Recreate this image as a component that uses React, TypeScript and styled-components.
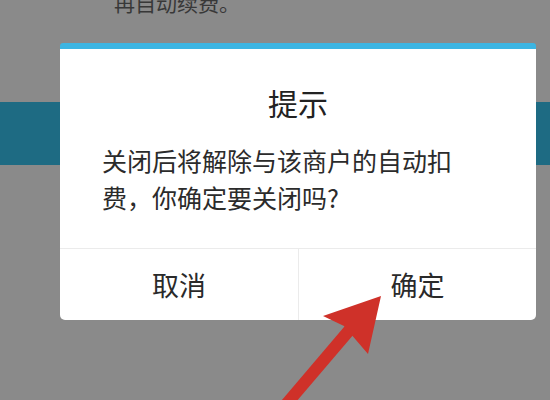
import React from "react";
import styled, { createGlobalStyle } from "styled-components";

const GlobalStyle = createGlobalStyle`
    html, body {
        margin: 0;
        padding: 0;
    }
    body {
        font-family: "Noto Sans CJK SC", "Noto Sans", sans-serif;
    }
`;

const StyledPage = styled.div`
    position: relative;
    width: 550px;
    height: 400px;
    overflow: hidden;
    background-color: #8a8a8a;
`;

const BehindText = styled.div`
    margin-top: -12px;
    padding-left: 114px;
    font-size: 21px;
    line-height: 28px;
    color: #383838;
`;

const BehindBand = styled.div`
    margin-top: 86px;
    height: 63px;
    background-color: #1e6b83;
`;

const StyledDialog = styled.div`
    position: absolute;
    left: 60px;
    top: 43px;
    width: 476px;
    height: 277px;
    box-sizing: border-box;
    display: flex;
    flex-direction: column;
    background-color: #fff;
    border-top: 6px solid #3cb5e2;
    border-radius: 3px 3px 5px 5px;
    color: #2b2b2b;
`;

const DialogTitle = styled.div`
    padding-top: 33px;
    font-size: 30px;
    line-height: 40px;
    text-align: center;
    color: #222;
`;

const DialogMessage = styled.div`
    margin-top: 20px;
    padding: 0 70px 32px 42px;
    font-size: 25px;
    line-height: 37px;
    border-bottom: 1px solid #ebebeb;
`;

const ButtonRow = styled.div`
    flex: 1;
    display: grid;
    grid-template-columns: 1fr 1fr;
`;

const DialogButton = styled.div<{ $divider?: boolean }>`
    display: flex;
    align-items: center;
    justify-content: center;
    font-size: 27px;
    color: #2a2a2a;
    border-left: ${(p) => (p.$divider ? "1px solid #ebebeb" : "none")};
`;

const ArrowLayer = styled.svg`
    position: absolute;
    left: 0;
    top: 0;
    width: 550px;
    height: 400px;
    pointer-events: none;
`;

const App = () => {
    return (
        <>
            <GlobalStyle />
            <StyledPage>
                <BehindText>再自动续费。</BehindText>
                <BehindBand />
                <StyledDialog>
                    <DialogTitle>提示</DialogTitle>
                    <DialogMessage>
                        关闭后将解除与该商户的自动扣费，你确定要关闭吗?
                    </DialogMessage>
                    <ButtonRow>
                        <DialogButton>取消</DialogButton>
                        <DialogButton $divider>确定</DialogButton>
                    </ButtonRow>
                </StyledDialog>
                <ArrowLayer viewBox="0 0 550 400">
                    <line
                        x1="283"
                        y1="408"
                        x2="352"
                        y2="327"
                        stroke="#cf3129"
                        strokeWidth="12"
                    />
                    <polygon
                        points="381,296 323,316 344,326 368,354"
                        fill="#cf3129"
                    />
                </ArrowLayer>
            </StyledPage>
        </>
    );
};

export default App;
